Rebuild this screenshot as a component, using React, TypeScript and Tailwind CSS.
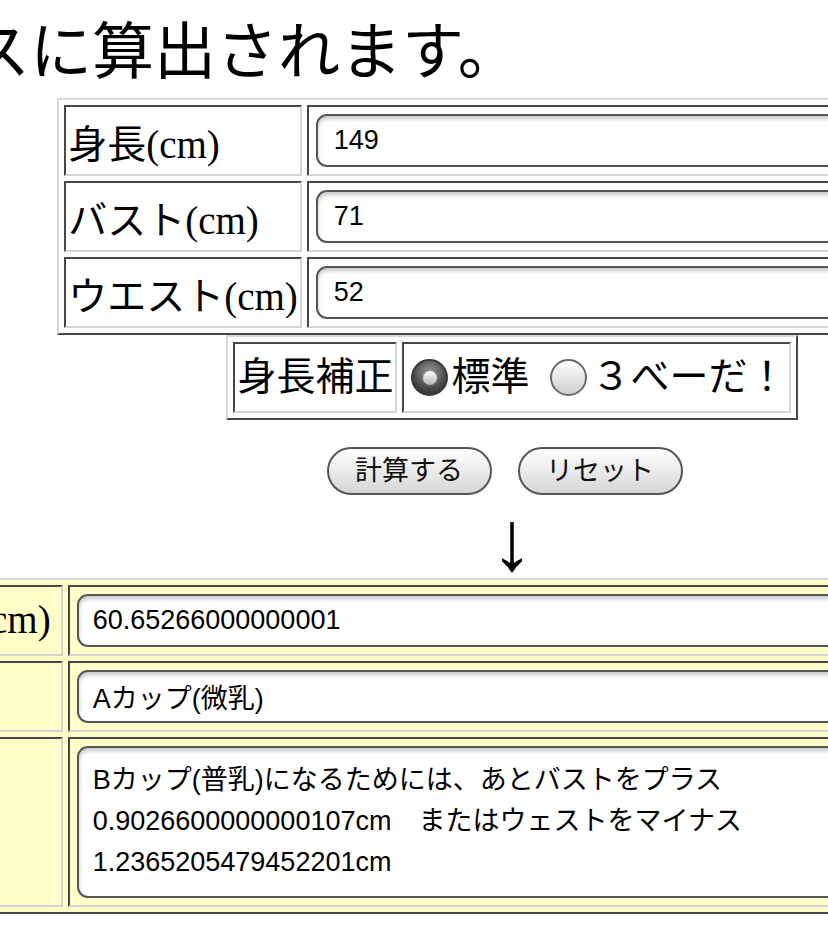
import React from 'react';

const serif = "font-['Liberation_Serif','Noto_Sans_CJK_JP',serif]";
const sans = "font-['Liberation_Sans','Noto_Sans_CJK_JP',sans-serif]";

const outer =
  'border-separate border-spacing-[5px] border-2 border-t-[#d9d9d9] border-l-[#d9d9d9] border-r-[#474747] border-b-[#474747]';
const cell =
  'border-2 border-t-[#474747] border-l-[#474747] border-r-[#d4d4d4] border-b-[#d4d4d4] p-[2px]';
const field =
  'block ml-[5px] my-[5px] rounded-[11px] border-2 border-[#555] bg-white text-[27px] text-black shadow-[inset_0_3px_4px_rgba(0,0,0,0.22)] outline-none';

const inputs = [
  { label: '身長(cm)', value: '149' },
  { label: 'バスト(cm)', value: '71' },
  { label: 'ウエスト(cm)', value: '52' },
];

const Radio = ({ checked }: { checked?: boolean }) =>
  checked ? (
    <span className="flex h-[37px] w-[37px] shrink-0 items-center justify-center rounded-full border-2 border-[#3a3a3a] bg-[radial-gradient(circle_at_50%_35%,#9a9a9a,#3c3c3c_70%)]">
      <span className="h-[14px] w-[14px] rounded-full bg-linear-to-b from-white to-[#b5b5b5]" />
    </span>
  ) : (
    <span className="block h-[37px] w-[37px] shrink-0 rounded-full border-2 border-[#6a6a6a] bg-linear-to-b from-white to-[#cfcfcf]" />
  );

const PillButton = ({ children }: { children: React.ReactNode }) => (
  <button
    className={`flex h-[48px] w-[165px] items-center justify-center rounded-full border-2 border-[#555] bg-linear-to-b from-white to-[#d6d6d6] text-[27px] text-[#111] ${sans}`}
  >
    {children}
  </button>
);

export default function App() {
  const advice =
    'Bカップ(普乳)になるためには、あとバストをプラス\n0.9026600000000107cm　またはウェストをマイナス\n1.2365205479452201cm';

  return (
    <div className="h-[928px] w-[828px] overflow-hidden bg-white text-black">
      <div className="w-[1024px]">
        <p className={`ml-[-32px] mt-[22px] h-[62px] whitespace-nowrap text-[62px] leading-[62px] ${serif}`}>
          スに算出されます。
        </p>

        {/* 入力欄 */}
        <table className={`mx-auto mt-[14px] ${outer}`}>
          <tbody>
            {inputs.map((row) => (
              <tr key={row.label}>
                <td className={`${cell} whitespace-nowrap pt-[12px] text-[39px] leading-tight ${serif}`}>
                  {row.label}
                </td>
                <td className={cell}>
                  <input
                    readOnly
                    value={row.value}
                    className={`${field} h-[53px] w-[640px] px-[16px] ${sans}`}
                  />
                </td>
              </tr>
            ))}
          </tbody>
        </table>

        <table className={`mx-auto ${outer}`}>
          <tbody>
            <tr>
              <td className={`${cell} whitespace-nowrap text-[39px] leading-tight ${serif}`}>身長補正</td>
              <td className={cell}>
                <div className={`flex h-[63px] items-center whitespace-nowrap text-[39px] ${serif}`}>
                  <span className="ml-[5px] mr-[3px]">
                    <Radio checked />
                  </span>
                  標準
                  <span className="ml-[20px] mr-[5px]">
                    <Radio />
                  </span>
                  ３べーだ！
                </div>
              </td>
            </tr>
          </tbody>
        </table>

        <div className="mt-[27px] flex justify-center gap-[26px] pr-[15px]">
          <PillButton>計算する</PillButton>
          <PillButton>リセット</PillButton>
        </div>

        <p className={`mt-[13px] h-[66px] text-center text-[85px] leading-[66px] ${serif}`}>↓</p>

        {/* 結果 */}
        <table className={`ml-[-305px] mt-[4px] bg-[#ffffc8] ${outer}`}>
          <tbody>
            <tr>
              <td className={`${cell} whitespace-nowrap pr-[10px] text-[39px] leading-tight ${serif}`}>
                アンダーバスト(cm)
              </td>
              <td className={cell}>
                <input
                  readOnly
                  value="60.65266000000001"
                  className={`${field} h-[53px] w-[1000px] px-[14px] ${sans}`}
                />
              </td>
            </tr>
            <tr>
              <td className={`${cell} whitespace-nowrap text-[39px] leading-tight ${serif}`}>カップ</td>
              <td className={cell}>
                <input
                  readOnly
                  value="Aカップ(微乳)"
                  className={`${field} h-[53px] w-[1000px] px-[14px] ${sans}`}
                />
              </td>
            </tr>
            <tr>
              <td className={`${cell} whitespace-nowrap text-[39px] leading-tight ${serif}`}>アドバイス</td>
              <td className={cell}>
                <textarea
                  readOnly
                  value={advice}
                  className={`${field} h-[152px] w-[1000px] resize-none overflow-hidden px-[14px] pt-[12px] leading-[41px] ${sans}`}
                />
              </td>
            </tr>
          </tbody>
        </table>
      </div>
    </div>
  );
}
